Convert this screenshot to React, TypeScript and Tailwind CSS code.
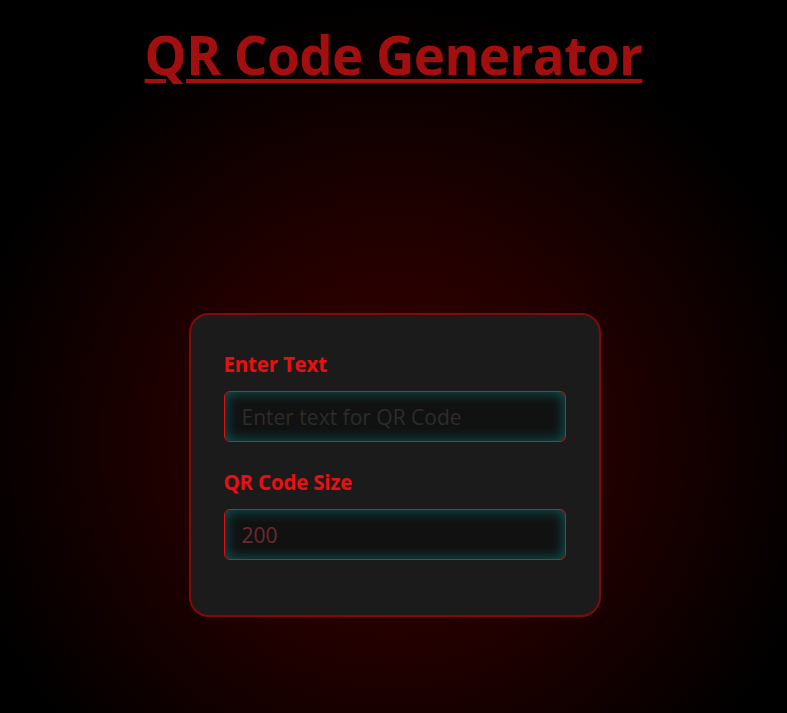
import React, { useState } from 'react';

const App: React.FC = () => {
  const [text, setText] = useState('');
  const [size, setSize] = useState('200');

  return (
    <div
      className="min-h-screen w-full bg-[radial-gradient(circle_at_50%_62%,#380000_0%,#220000_35%,#000000_75%)] flex flex-col items-center"
      style={{ fontFamily: '"Open Sans", "Noto Sans", sans-serif' }}
    >
      <h1 className="mt-[15px] text-[53px] leading-[80px] font-bold text-[#a30f0f] underline decoration-[4px] underline-offset-[4px] tracking-[-0.6px]">
        QR Code Generator
      </h1>

      {/* Form card */}
      <div className="mt-[218px] ml-[2px] w-[412px] bg-[#1b1b1b] border-2 border-[#820a0a] rounded-[20px] px-[33px] pt-[35px] pb-[55px]">
        <div className="flex flex-col">
          <label className="text-[20.5px] font-bold text-[#e81010] leading-[28px] tracking-[-0.2px]">Enter Text</label>
          <input
            type="text"
            value={text}
            onChange={(e) => setText(e.target.value)}
            placeholder="Enter text for QR Code"
            className="mt-[13px] h-[51px] w-full rounded-[6px] border border-[#e01010] bg-[#111111] px-[17px] text-[21px] text-[#6b2b2b] placeholder:text-[#2c2c2c] outline-none shadow-[inset_0_0_14px_#0d5c5c]"
          />
        </div>

        <div className="mt-[26px] flex flex-col">
          <label className="text-[20.5px] font-bold text-[#e81010] leading-[28px] tracking-[-0.2px]">QR Code Size</label>
          <input
            type="number"
            value={size}
            onChange={(e) => setSize(e.target.value)}
            className="mt-[13px] h-[51px] w-full rounded-[6px] border border-[#e01010] bg-[#111111] px-[17px] text-[21px] text-[#6b2b2b] outline-none shadow-[inset_0_0_14px_#0d5c5c] [appearance:textfield] [&::-webkit-inner-spin-button]:appearance-none [&::-webkit-outer-spin-button]:appearance-none"
          />
        </div>
      </div>
    </div>
  );
};

export default App;
